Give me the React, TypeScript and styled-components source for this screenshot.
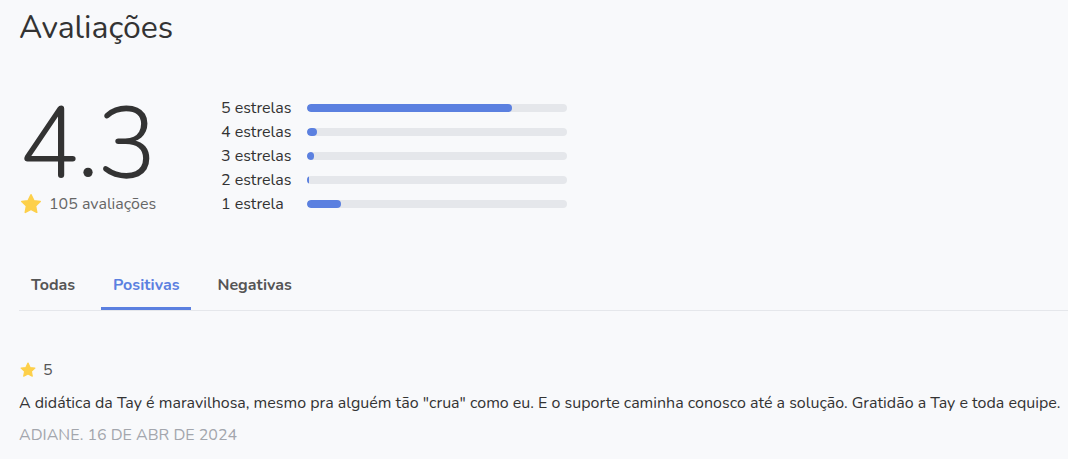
import React from "react";
import styled, { createGlobalStyle } from "styled-components";

const Global = createGlobalStyle`
  html, body { margin: 0; padding: 0; background: #f8f9fb; }
  body { font-family: "Nunito", "Lato", "Noto Sans", sans-serif; color: #333; }
`;

const Page = styled.div`
  padding: 8px 0 0 19px;
  width: 1068px;
  box-sizing: border-box;
`;

const Title = styled.h1`
  margin: 0;
  font-size: 32px;
  font-weight: 400;
  line-height: 40px;
  color: #333;
`;

const Summary = styled.section`
  display: flex;
  align-items: flex-start;
  margin-top: 48px;
`;

const ScoreBox = styled.div`
  width: 202px;
  display: flex;
  flex-direction: column;
`;

const Score = styled.div`
  margin-top: 3px;
  font-size: 100px;
  font-weight: 300;
  line-height: 90px;
  color: #333;
  letter-spacing: -2px;
`;

const CountRow = styled.div`
  display: flex;
  align-items: center;
  gap: 6px;
  margin-top: 3px;
  font-size: 16px;
  color: #666;
`;

const Bars = styled.div`
  display: flex;
  flex-direction: column;
`;

const BarRow = styled.div`
  display: flex;
  align-items: center;
  height: 24px;
`;

const BarLabel = styled.span`
  width: 86px;
  font-size: 16px;
  color: #333;
`;

const Track = styled.div`
  width: 260px;
  height: 8px;
  border-radius: 4px;
  background: #e5e7eb;
  overflow: hidden;
`;

const Fill = styled.div`
  height: 100%;
  border-radius: 4px;
  background: #5b80e0;
`;

const Tabs = styled.nav`
  display: flex;
  gap: 14px;
  margin-top: 51px;
  border-bottom: 1px solid #e5e7eb;
`;

const Tab = styled.button<{ $active?: boolean }>`
  background: none;
  border: none;
  font-family: inherit;
  font-size: 16px;
  font-weight: 700;
  line-height: 20px;
  padding: 8px 12px 12px;
  cursor: pointer;
  color: ${(p) => (p.$active ? "#5b80e0" : "#555")};
  border-bottom: 3px solid ${(p) => (p.$active ? "#5b80e0" : "transparent")};
`;

const Review = styled.article`
  margin-top: 49px;
  display: flex;
  flex-direction: column;
`;

const RatingRow = styled.div`
  display: flex;
  align-items: center;
  gap: 6px;
  font-size: 16px;
  color: #555;
  height: 20px;
`;

const ReviewText = styled.p`
  margin: 13px 0 0;
  font-size: 16px;
  line-height: 20px;
  color: #333;
`;

const ReviewMeta = styled.div`
  margin-top: 12px;
  font-size: 16px;
  line-height: 20px;
  color: #a3a6ad;
  text-transform: uppercase;
`;

const Star = ({ size }: { size: number }) => (
  <svg width={size} height={size} viewBox="0 0 24 24">
    <path
      d="M12 2.8l2.8 5.9 6.4.8-4.7 4.4 1.2 6.4L12 17.2l-5.7 3.1 1.2-6.4-4.7-4.4 6.4-.8z"
      fill="#fdd04a"
      stroke="#fdd04a"
      strokeWidth="1.6"
      strokeLinejoin="round"
    />
  </svg>
);

const bars = [
  { label: "5 estrelas", pct: 79 },
  { label: "4 estrelas", pct: 4 },
  { label: "3 estrelas", pct: 2.8 },
  { label: "2 estrelas", pct: 0.8 },
  { label: "1 estrela", pct: 13 },
];

export default function App() {
  return (
    <Page>
      <Global />
      <Title>Avaliações</Title>
      <Summary>
        <ScoreBox>
          <Score>4.3</Score>
          <CountRow>
            <Star size={24} />
            <span>105 avaliações</span>
          </CountRow>
        </ScoreBox>
        <Bars>
          {bars.map((b) => (
            <BarRow key={b.label}>
              <BarLabel>{b.label}</BarLabel>
              <Track>
                <Fill style={{ width: `${b.pct}%` }} />
              </Track>
            </BarRow>
          ))}
        </Bars>
      </Summary>
      <Tabs>
        <Tab>Todas</Tab>
        <Tab $active>Positivas</Tab>
        <Tab>Negativas</Tab>
      </Tabs>
      <Review>
        <RatingRow>
          <Star size={18} />
          <span>5</span>
        </RatingRow>
        <ReviewText>
          A didática da Tay é maravilhosa, mesmo pra alguém tão "crua" como eu. E o suporte caminha conosco até a solução. Gratidão a Tay e toda equipe.
        </ReviewText>
        <ReviewMeta>Adiane. 16 de abr de 2024</ReviewMeta>
      </Review>
    </Page>
  );
}
